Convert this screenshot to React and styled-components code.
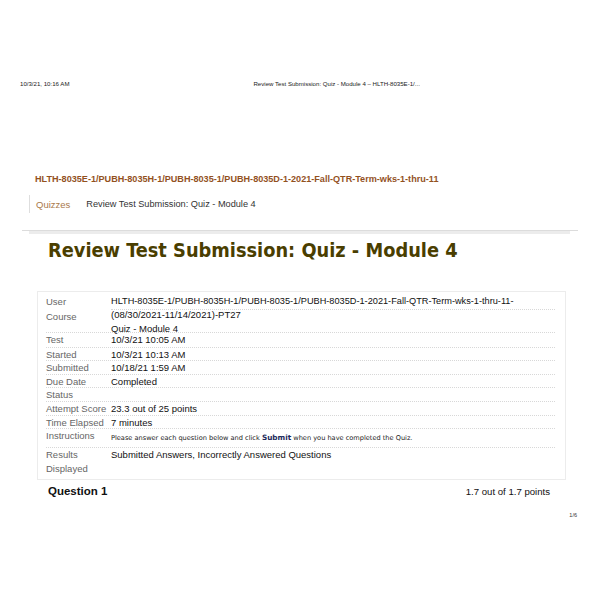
import React from 'react'
import styled, { createGlobalStyle } from 'styled-components'

const GlobalStyle = createGlobalStyle`
  html, body {
    margin: 0;
    padding: 0;
    background: #fff;
  }
  body {
    font-family: "Liberation Sans", Arial, sans-serif;
    color: #111;
  }
`

const rows = [
  { label: ['User'], value: ['HLTH-8035E-1/PUBH-8035H-1/PUBH-8035-1/PUBH-8035D-1-2021-Fall-QTR-Term-wks-1-thru-11-'], height: 15, valueLineOnly: true, tight: true },
  { label: ['Course'], value: ['(08/30/2021-11/14/2021)-PT27', 'Quiz - Module 4'], height: 23, shiftUp: true },
  { label: ['Test'], value: ['10/3/21 10:05 AM'], height: 15 },
  { label: ['Started'], value: ['10/3/21 10:13 AM'], height: 13 },
  { label: ['Submitted'], value: ['10/18/21 1:59 AM'], height: 14 },
  { label: ['Due Date'], value: ['Completed'], height: 13 },
  { label: ['Status'], value: [], height: 14 },
  { label: ['Attempt Score'], value: ['23.3 out of 25 points'], height: 14 },
  { label: ['Time Elapsed'], value: ['7 minutes'], height: 13 },
  { label: ['Instructions'], value: null, height: 19, instructions: true },
  { label: ['Results', 'Displayed'], value: ['Submitted Answers, Incorrectly Answered Questions'], height: 27, last: true },
]

const App = () => {
  return (
    <>
      <GlobalStyle />
      <Page>
        <PrintHeader>
          <span>10/3/21, 10:16 AM</span>
          <PrintTitle>Review Test Submission: Quiz - Module 4 – HLTH-8035E-1/...</PrintTitle>
        </PrintHeader>

        <CourseName>HLTH-8035E-1/PUBH-8035H-1/PUBH-8035-1/PUBH-8035D-1-2021-Fall-QTR-Term-wks-1-thru-11</CourseName>

        <Breadcrumbs>
          <Crumb $link>Quizzes</Crumb>
          <Crumb>Review Test Submission: Quiz - Module 4</Crumb>
        </Breadcrumbs>

        <Divider />
        <DividerBar />

        <Heading>Review Test Submission: Quiz - Module 4</Heading>

        <InfoBox>
          {rows.map((row, i) => (
            <InfoRow key={i} $h={row.height} $noLine={row.valueLineOnly || row.last}>
              <Label $two={row.label.length > 1}>
                {row.label.map((l) => <div key={l}>{l}</div>)}
              </Label>
              <Value
                $line={row.valueLineOnly}
                $pad={row.instructions ? 2 : 0}
                $shift={row.shiftUp}
                $tight={row.tight}
              >
                {row.instructions ? (
                  <Instructions>
                    Please answer each question below and click <strong>Submit</strong> when you have completed the Quiz.
                  </Instructions>
                ) : (
                  row.value.map((v) => <div key={v}>{v}</div>)
                )}
              </Value>
            </InfoRow>
          ))}
        </InfoBox>

        <QuestionHeader>
          <QuestionTitle>Question 1</QuestionTitle>
          <Points>1.7 out of 1.7 points</Points>
        </QuestionHeader>

        <PageNumber>1/6</PageNumber>
      </Page>
    </>
  )
}

export default App

const Page = styled.div`
  width: 600px;
  height: 600px;
  overflow: hidden;
`

const PrintHeader = styled.div`
  display: flex;
  padding: 80px 0 0 20px;
  font-size: 6.1px;
  line-height: 7px;
  color: #222;
`

const PrintTitle = styled.span`
  margin-left: 184px;
`

const CourseName = styled.div`
  margin: 86px 0 0 35px;
  font-size: 9.1px;
  line-height: 12px;
  font-weight: bold;
  color: #93511e;
`

const Breadcrumbs = styled.div`
  display: flex;
  align-items: center;
  margin: 10px 0 0 29px;
  height: 18px;
  border-left: 1px solid #dedede;
  padding-left: 6px;
  gap: 16px;
`

const Crumb = styled.span`
  font-size: ${(p) => (p.$link ? '9.5px' : '9.2px')};
  color: ${(p) => (p.$link ? '#a9784a' : '#333')};
`

const Divider = styled.div`
  margin: 17px 22px 0 22px;
  height: 1px;
  background: #dcdcdc;
`

const DividerBar = styled.div`
  margin: 0 30px 0 29px;
  height: 3px;
  background: #ececec;
`

const Heading = styled.h1`
  margin: 4px 0 0 48px;
  font-family: "DejaVu Sans", sans-serif;
  font-stretch: condensed;
  font-size: 19.8px;
  line-height: 26px;
  font-weight: bold;
  color: #4a3e00;
`

const InfoBox = styled.div`
  margin: 27px 34px 0 37px;
  border: 1px solid #ececec;
  padding: 3px 10px 4px 8px;
`

const InfoRow = styled.div`
  box-sizing: border-box;
  display: grid;
  grid-template-columns: 65px 1fr;
  height: ${(p) => p.$h}px;
  border-bottom: ${(p) => (p.$noLine ? 'none' : '1px dotted #d8d8d8')};
  font-size: 9.5px;
  line-height: 13.5px;
`

const Label = styled.div`
  color: #666;
  line-height: ${(p) => (p.$two ? '14px' : 'inherit')};
`

const Value = styled.div`
  color: #111;
  padding-top: ${(p) => p.$pad}px;
  margin-top: ${(p) => (p.$shift ? '-2px' : '0')};
  line-height: ${(p) => (p.$shift ? '14px' : 'inherit')};
  font-size: ${(p) => (p.$tight ? '9.2px' : 'inherit')};
  border-bottom: ${(p) => (p.$line ? '1px dotted #d8d8d8' : 'none')};
`

const Instructions = styled.div`
  font-family: "DejaVu Sans", sans-serif;
  font-size: 6.6px;
  color: #222;
  strong {
    color: #1c2a5c;
    font-size: 7.3px;
  }
`

const QuestionHeader = styled.div`
  display: flex;
  justify-content: space-between;
  align-items: baseline;
  margin: 5px 50px 0 48px;
`

const QuestionTitle = styled.div`
  font-size: 11.5px;
  font-weight: bold;
`

const Points = styled.div`
  font-size: 9.6px;
`

const PageNumber = styled.div`
  margin: 15px 23px 0 0;
  text-align: right;
  font-size: 5.5px;
  color: #333;
`
